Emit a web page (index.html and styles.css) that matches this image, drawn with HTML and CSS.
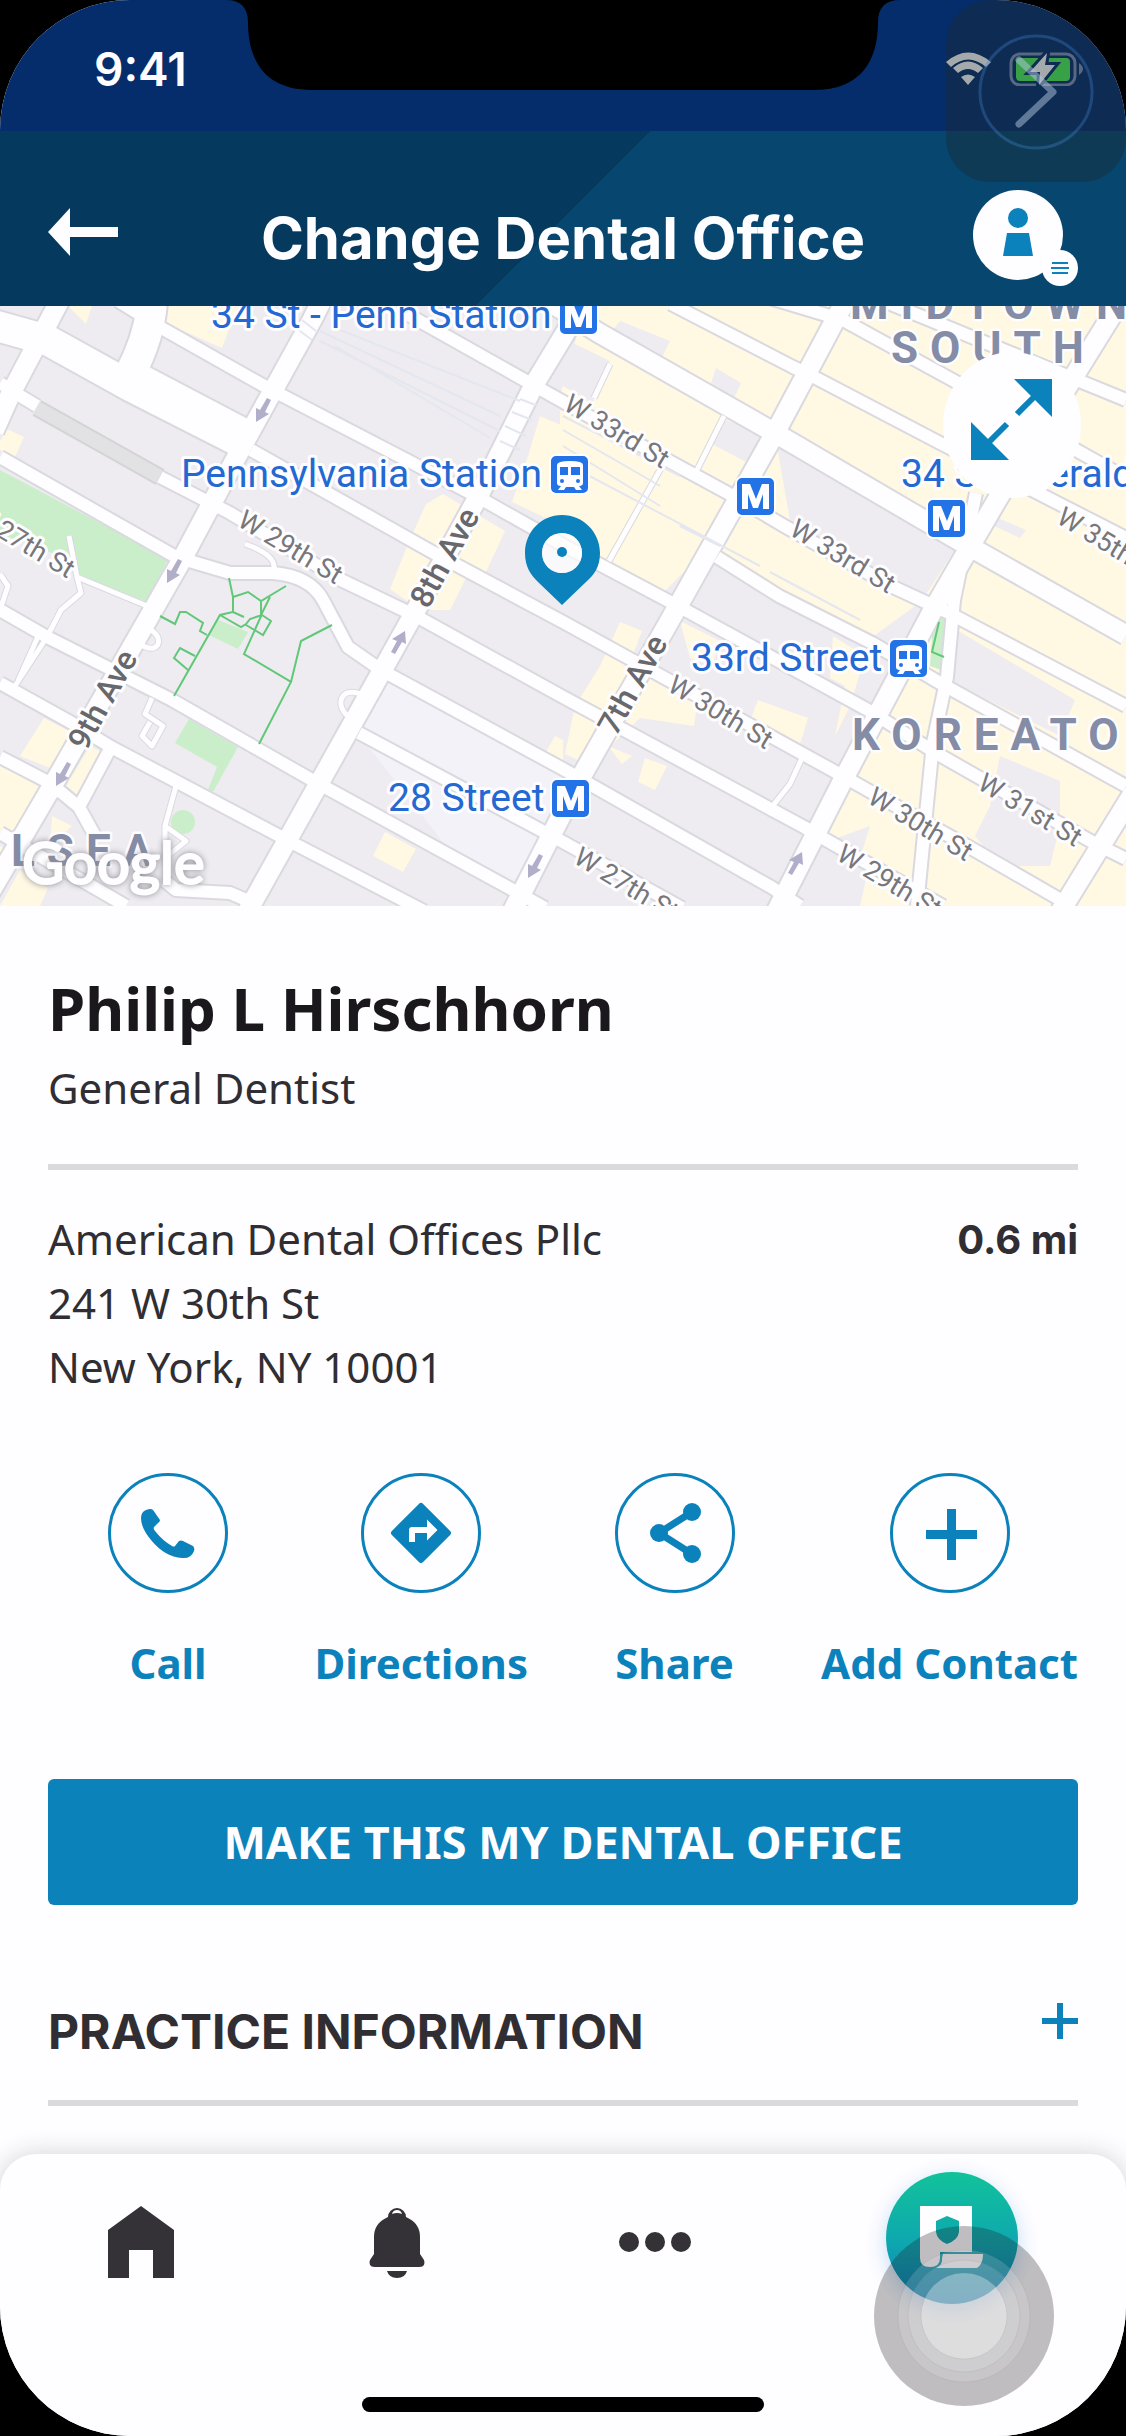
FILE: index.html
```html
<!DOCTYPE html>
<html lang="en">
<head>
<meta charset="utf-8">
<meta name="viewport" content="width=device-width, initial-scale=1">
<title>Change Dental Office</title>
<link rel="stylesheet" href="styles.css">
</head>
<body>
<div class="phone">
  <div class="status-bar">
    <span class="clock">9:41</span>
    <svg class="notch" viewBox="0 0 674 90" aria-hidden="true"><path d="M0 0C15 0 22 8 22 22C22 62 40 90 86 90H588C634 90 652 62 652 22C652 8 659 0 674 0Z"/></svg>
    <svg class="indicators" viewBox="0 0 137 34" role="img" aria-label="Wi-Fi, battery charging">
      <path class="wifi" d="M22 33L15 25Q22 20 29 25ZM7 16L12 21Q22 13 32 21L37 16Q22 3 7 16ZM0 10L5 15Q22 0 40 15L45 10Q22 -9 0 10Z"/>
      <rect class="battery-case" x="65" y="2" width="64" height="31" rx="9"/>
      <path class="battery-case-tip" d="M133 11Q141 17 133 23Z"/>
      <rect class="battery-level" x="70" y="6" width="54" height="23" rx="4"/>
      <path class="bolt" d="M101 1L84 20H94L93 33L109 13H99Z"/>
    </svg>
  </div>

  <header class="app-header">
    <button class="icon-button back" type="button" aria-label="Back">
      <svg width="70" height="48" viewBox="0 0 70 48" fill="currentColor"><path d="M22 0V19H70V29H22V48L0 24Z"/></svg>
    </button>
    <h1 class="app-title">Change Dental Office</h1>
    <button class="icon-button profile" type="button" aria-label="Profile menu">
      <svg width="105" height="96" viewBox="0 0 105 96">
        <circle cx="45" cy="45" r="45" fill="#fefdff"/><circle cx="87" cy="78" r="18" fill="#fefdff"/>
        <g fill="#0b82bb"><circle cx="45" cy="28" r="10"/><path d="M34 43H56L60 66H30Z"/></g>
        <path d="M79 73H95M78 78H96M79 83H95" stroke="#0b82bb" stroke-width="2"/>
      </svg>
    </button>
  </header>

  <section class="map" aria-label="Map">
    <svg class="map-canvas" viewBox="0 0 1126 600" preserveAspectRatio="xMidYMid slice">
      <rect width="1126" height="600" fill="#eeecf0"/>
      <!-- commercial blocks -->
      <g fill="#fff8e2">
        <path d="M165 0H238L222 42L163 16ZM0 135L7 123L24 131L15 151L0 144ZM68 0H92L86 18Z"/>
        <path d="M540 110L563 120V220L512 196L528 150ZM426 198L443 188L505 225L485 268L470 264L450 304L420 304L390 283L408 238Z"/>
        <path d="M585 0H1126V330L940 304L720 180L560 90Z"/>
        <path d="M560 104L735 190L690 260L660 290L560 240Z"/>
        <path d="M735 190L910 290L915 300L860 340L712 256Z"/>
        <path d="M960 235L1126 327V600H845L870 520L815 540L850 470L945 300Z"/>
        <path d="M620 316L642 325L634 346L650 356L700 380L694 420L640 412L590 460L565 448L575 400L600 360ZM680 315L720 335L712 360L690 352ZM758 394L808 412L800 438L750 415ZM645 452L667 460L655 484L638 476ZM608 440L632 450L622 458Z"/>
        <path d="M833 330L865 350L850 400L835 430L845 380L830 372ZM44 412L90 436L70 470L20 450ZM0 460L52 486L28 520L0 527ZM90 440L103 447L78 490L66 480ZM0 540L20 550L0 570ZM52 510L72 520L50 540ZM20 564L48 582L40 600H0ZM385 526L416 543L403 566L373 550ZM555 430L563 434V460L546 446Z"/>
      </g>
      <g fill="#eeecf0">
        <path d="M620 15L670 35L660 55L610 28ZM716 62L741 77L734 92L710 80ZM726 114L762 128L746 156L712 138ZM777 140L956 242L925 290L790 215ZM563 32L610 55L592 98L563 80ZM950 320L1075 394L1060 430L940 370ZM1000 450L1060 475L1060 520L1050 560H1000L975 530L990 500ZM998 212L1026 224L1020 232L994 220ZM820 530L870 555L860 600H795Z"/>
      </g>
      <path d="M386 374L563 470V520L513 575L450 545L356 425Z" fill="#f2f2f8"/>
      <g fill="#c9eec9">
        <path d="M0 164L168 253L147 296L77 268L60 250L0 228Z"/>
        <path d="M218 314L248 326L238 343L209 329ZM189 413L238 441L213 486L208 484L217 461L175 437ZM933 316L947 308L941 364L930 360Z"/>
        <ellipse cx="183" cy="516" rx="12" ry="12"/>
      </g>
      <path d="M37 102L160 171" stroke="#d4d4d7" stroke-width="18" fill="none"/>
      <path d="M37 102L160 171" stroke="#e2e2e4" stroke-width="14" fill="none"/>
      <defs>
        <g id="side-streets">
          <path d="M69 230L77 271L81 287L61 304L47 331L15 380M77 271L147 300M0 304L8 280L0 268M245 238Q280 250 273 267M144 322C165 325 162 350 143 340M152 392L145 408L163 420L152 440L142 430L150 416M176 480L165 520L186 535L170 548M361 388C340 380 335 400 348 410M610 58L594 92M724 110L697 164M665 155L609 255M802 452L790 478L771 502M165 520V560M40 326L18 375"/>
        </g>
        <g id="streets">
          <path d="M0 77L22 91L37 100M160 171L230 207L341 274L416 310L563 391L804 521L821 531L943 600"/>
          <path d="M118 -5L165 24L266 81L478 191L563 239L678 300L868 404L936 447L1094 537L1126 553"/>
          <path d="M251 144L434 247L563 316L832 464L976 545L1066 597"/>
          <path d="M0 151L176 251L230 267H273Q310 270 323 294L348 341L381 364L563 463L771 581L800 600"/>
          <path d="M359 427L563 536L682 602M0 304L47 331L172 394L312 474L513 584L545 602M0 377L72 417L111 441L287 534L424 605M0 451L50 477L79 501L95 530M0 527L126 600M50 477L54 492M111 441L79 501M165 575L176 584L230 587L251 596"/>
          <path d="M400 4L535 80L667 154L735 191L786 221L893 281L947 306L1126 400M717 251L779 290L872 337L940 377L1126 480"/>
          <path d="M671 -2L793 61L814 71L940 137L1126 232M763 -10L843 14L958 77L1076 144L1126 172M886 -4L1126 94"/>
          <path d="M976 187L954 294L947 371L933 437L917 600"/>
        </g>
        <g id="avenues">
          <path d="M60 -6L11 87L-6 125M325 -12L312 14L244 137L180 257L54 477L-12 590M590 -14L535 77L478 191L416 304L246 608M850 -14L775 127L678 300L581 471L510 610M1130 -20L997 194L933 304L843 474L775 608M1140 476L1060 606"/>
          <path d="M540 -10L599 27L775 127L958 234L1126 329"/>
        </g>
        <g id="crosstown">
          <path d="M-10 18L47 34L130 80L248 140M152 -5Q150 30 130 68L248 130"/>
        </g>
      </defs>
      <g fill="none" stroke="#dad9df" stroke-linejoin="round">
        <use href="#side-streets" stroke-width="7"/><use href="#streets" stroke-width="16"/>
        <use href="#avenues" stroke-width="23"/><use href="#crosstown" stroke-width="34"/>
      </g>
      <g fill="none" stroke="#fefdff" stroke-linejoin="round">
        <use href="#side-streets" stroke-width="5"/><use href="#streets" stroke-width="12"/>
        <use href="#avenues" stroke-width="19"/><use href="#crosstown" stroke-width="30"/>
      </g>
      <!-- railway tracks -->
      <path d="M320 25L500 110M320 35L500 125M335 40L490 132M330 20L520 95M520 93L538 100M512 106L532 114M505 120L526 130M500 135L520 144M563 110L680 170M563 124L660 180M563 140L660 200M563 156L760 260M680 220L720 240M770 266L860 314M296 22L312 34M302 14L316 25" stroke="#e4e7ef" stroke-width="2" fill="none"/>
      <!-- park paths -->
      <path d="M229 272L233 291V306L220 309L174 390M233 291L248 286L261 295L286 280M261 295V309L270 291M262 308L244 348L291 376L259 438M291 376L301 335L332 319M233 306L244 311M220 309L241 321L246 318L250 313L262 309L271 315L263 329L246 319M160 310L175 318L180 306H186L203 317L200 325L207 329M188 364L174 352L180 342L195 350M939 316L932 346L944 351" stroke="#60c878" stroke-width="2" fill="none"/>
      <g fill="#b1aeca">
        <path id="one-way" d="M267 92L271 94L265 106L269 108L256 116V102L260 104Z"/>
        <use href="#one-way" x="-89" y="161"/><use href="#one-way" x="-200" y="364"/><use href="#one-way" x="272" y="456"/>
        <path id="one-way-up" d="M391 346L395 348L402 336L406 338L405 325L392 333L397 335Z"/>
        <use href="#one-way-up" x="397" y="221"/>
      </g>
      <g class="transit-label">
        <text x="211" y="22">34 St - Penn Station</text>
        <text x="181" y="181">Pennsylvania Station</text>
        <text x="388" y="505">28 Street</text>
        <text x="691" y="365">33rd Street</text>
        <text x="901" y="181">34 St - Herald Sq</text>
      </g>
      <g class="street-label">
        <text transform="translate(562 103) rotate(31)">W 33rd St</text>
        <text transform="translate(788 228) rotate(31)">W 33rd St</text>
        <text transform="translate(1055 216) rotate(31)">W 35th St</text>
        <text transform="translate(236 219) rotate(31)">W 29th St</text>
        <text transform="translate(-32 213) rotate(31)">W 27th St</text>
        <text transform="translate(666 384) rotate(31)">W 30th St</text>
        <text transform="translate(866 496) rotate(31)">W 30th St</text>
        <text transform="translate(976 482) rotate(31)">W 31st St</text>
        <text transform="translate(835 553) rotate(31)">W 29th St</text>
        <text transform="translate(572 556) rotate(31)">W 27th St</text>
      </g>
      <g class="avenue-label">
        <text transform="translate(428 304) rotate(-61)">8th Ave</text>
        <text transform="translate(86 446) rotate(-61)">9th Ave</text>
        <text transform="translate(616 431) rotate(-61)">7th Ave</text>
      </g>
      <g class="district-label">
        <text x="850" y="13">MIDTOWN</text>
        <text x="891" y="57">SOUTH</text>
        <text x="852" y="444">KOREATOWN</text>
        <text x="11" y="560">LSEA</text>
      </g>
      <defs>
        <g id="metro"><rect width="39" height="39" rx="6" fill="#2373e6" stroke="#fefdff" stroke-width="2"/><path d="M6 32V7H14L20 22L26 7H33V32H27V17L22 31H17L12 17V32Z" fill="#fefdff"/></g>
        <g id="train"><rect width="39" height="39" rx="6" fill="#2373e6" stroke="#fefdff" stroke-width="2"/><path d="M7 10Q7 6 20 6T33 10V28Q33 31 29 31L32 35H26L24 32H16L14 35H8L11 31Q7 31 7 28Z" fill="#fefdff"/><path d="M10 12H18V20H10ZM21 12H30V20H21Z" fill="#2373e6"/><circle cx="12" cy="26" r="2" fill="#2373e6"/><circle cx="28" cy="26" r="2" fill="#2373e6"/></g>
      </defs>
      <use href="#metro" x="559" y="-10"/><use href="#metro" x="736" y="171"/><use href="#metro" x="927" y="193"/><use href="#metro" x="551" y="473"/>
      <use href="#train" x="550" y="149"/><use href="#train" x="889" y="333"/>
      <path d="M562 209C541 209 525 226 525 247C525 261 531 269 538 276L562 299L586 276C594 269 600 261 600 247C600 226 583 209 562 209ZM562 227A20 20 0 1 1 562 267A20 20 0 1 1 562 227Z" fill="#0b82bb" fill-rule="evenodd"/>
      <circle cx="562" cy="247" r="20" fill="#fefdff" fill-opacity=".7"/>
      <circle cx="562" cy="246" r="5" fill="#0b82bb"/>
      <text class="map-brand" x="22" y="578">Google</text>
    </svg>
    <button class="expand" type="button" aria-label="Expand map">
      <svg width="82" height="82" viewBox="0 0 82 82"><g fill="#0b82bb"><path d="M43 0H81V38ZM0 43V81H38Z"/></g><path d="M65 16L46 35M16 65L36 45" stroke="#0b82bb" stroke-width="6"/></svg>
    </button>
  </section>

  <main class="details">
    <h2 class="name">Philip L Hirschhorn</h2>
    <p class="specialty">General Dentist</p>
    <div class="office">
      <address class="address">American Dental Offices Pllc<br>241 W 30th St<br>New York, NY 10001</address>
      <span class="distance">0.6 mi</span>
    </div>
    <div class="actions">
      <a class="action" href="#call"><span class="action-icon"><svg width="72" height="72" viewBox="0 0 72 72"><path d="M14 13Q19 11 21 13L28 23Q28 25 26 26L22 30Q21 32 23 34Q31 44 40 49Q42 50 43 49L47 44Q49 43 51 44L61 49Q63 51 62 54Q59 62 50 61Q33 60 19 43Q9 31 9 21Q9 15 14 13Z"/></svg></span>Call</a>
      <a class="action" href="#directions"><span class="action-icon"><svg width="72" height="72" viewBox="0 0 24 24"><path d="M21.700 11.300l-9-9a1 1 0 0 0-1.400 0l-9 9a1 1 0 0 0 0 1.400l9 9a1 1 0 0 0 1.400 0l9-9a1 1 0 0 0 0-1.400zM14 14.500V12h-4v3H8v-4c0-.6.4-1 1-1h5V7.500l3.500 3.500z"/></svg></span>Directions</a>
      <a class="action" href="#share"><span class="action-icon"><svg width="72" height="72" viewBox="0 0 72 72"><circle cx="53" cy="15" r="9"/><circle cx="20" cy="36" r="9"/><circle cx="53" cy="57" r="9"/><path d="M53 15L20 36L53 57" fill="none" stroke="currentColor" stroke-width="7"/></svg></span>Share</a>
      <a class="action" href="#contact"><span class="action-icon"><svg width="72" height="72" viewBox="0 0 72 72"><path d="M33 12H42V33H63V42H42V63H33V42H12V33H33Z"/></svg></span>Add Contact</a>
    </div>
    <button class="primary" type="button">MAKE THIS MY DENTAL OFFICE</button>
    <h2 class="section-title">
      <button class="section-toggle" type="button" aria-expanded="false">PRACTICE INFORMATION
        <svg width="36" height="42" viewBox="0 0 36 42"><path d="M18 3V39M0 21H36" stroke="#0b82bb" stroke-width="6"/></svg>
      </button>
    </h2>
  </main>

  <nav class="tab-bar" aria-label="Main">
    <div class="tabs">
      <a class="tab" href="#home" aria-label="Home"><svg width="66" height="72" viewBox="0 0 66 72"><path d="M33 0L66 24V72H45V44H21V72H0V24Z"/></svg></a>
      <a class="tab" href="#alerts" aria-label="Notifications"><svg width="56" height="72" viewBox="0 0 56 72"><path fill-rule="evenodd" d="M19 11A9 9 0 0 1 37 11Q51 17 51 31V48L55 54Q57 61 50 61H6Q-1 61 1 54L5 48V31Q5 17 19 11ZM23 8Q28 6 33 8Q32 4 28 4T23 8Z"/><path d="M18 65H38Q36 72 28 72T18 65Z"/></svg></a>
      <a class="tab" href="#more" aria-label="More"><svg width="72" height="20" viewBox="0 0 72 20"><circle cx="10" cy="10" r="10"/><circle cx="36" cy="10" r="10"/><circle cx="62" cy="10" r="10"/></svg></a>
      <a class="tab tab-plan" href="#plan" aria-label="My plan"><svg width="64" height="64" viewBox="0 0 64 64"><path fill-rule="evenodd" d="M0 0H52V46H20V52Q20 61 10 61Q0 61 0 52ZM27 10L16 15V26Q17 34 27 38Q38 34 39 26V15Z"/><path d="M23 48H63Q63 58 57 62H16Q23 59 22 52Z"/></svg></a>
    </div>
    <svg class="touch" viewBox="0 0 180 180" aria-hidden="true">
      <circle cx="90" cy="90" r="90" fill="#1c1a1e" fill-opacity=".28"/>
      <g fill="#fff" stroke="#808084" stroke-opacity=".15"><circle cx="90" cy="90" r="66" fill-opacity=".15"/><circle cx="90" cy="90" r="56" fill-opacity=".12"/><circle cx="90" cy="90" r="43" fill-opacity=".32"/></g>
    </svg>
    <div class="home-indicator"></div>
  </nav>

  <svg class="assistive" viewBox="0 0 180 182" aria-hidden="true">
    <rect width="180" height="182" rx="44" fill="#1c2830" fill-opacity=".4"/>
    <circle cx="90" cy="92" r="56" fill="none" stroke="#4488d0" stroke-opacity=".33" stroke-width="3"/>
    <path d="M73 60L107 92L73 124" fill="none" stroke="#b4c8e0" stroke-opacity=".5" stroke-width="7" stroke-linecap="round" stroke-linejoin="round"/>
  </svg>
</div>
</body>
</html>
```
FILE: styles.css
```css
* { box-sizing: border-box; }

body {
  margin: 0;
  background: #000;
  color: #302e32;
  font: 42px/64px "Noto Sans", sans-serif;
}

h1, h2, p { margin: 0; }
svg { display: block; }

button {
  padding: 0;
  border: 0;
  background: none;
  color: inherit;
  font: inherit;
  cursor: pointer;
}

a { color: inherit; text-decoration: none; }

.phone {
  position: relative;
  display: flex;
  flex-direction: column;
  min-height: 100vh;
  overflow: hidden;
  border-radius: 130px;
  background: #fefdff;
}

.status-bar {
  position: relative;
  display: flex;
  align-items: center;
  justify-content: space-between;
  height: 131px;
  padding: 6px 43px 0 94px;
  background: #052d6b;
  color: #fefdff;
}

.clock { font: 600 46px/64px Inter, sans-serif; }

.notch {
  position: absolute;
  top: 0;
  left: 50%;
  width: 674px;
  transform: translateX(-50%);
}

.indicators { width: 137px; height: 34px; }
.wifi { fill: #fff; }
.battery-case { fill: none; stroke: #8093b6; stroke-width: 3; }
.battery-case-tip { fill: #8093b6; }
.battery-level { fill: #4cf058; }
.bolt { fill: #fff; stroke: #052d6b; stroke-width: 6; paint-order: stroke; }

.app-header {
  display: grid;
  grid-template-columns: 1fr auto 1fr;
  align-items: center;
  height: 175px;
  padding: 38px 48px 0;
  background: linear-gradient(135deg, #053a5e 50%, #07466e 50%);
  color: #fefdff;
}

.back { justify-self: start; padding-bottom: 12px; }
.profile { justify-self: end; }
.app-title { font: 700 58px/80px Inter, sans-serif; }

.map { position: relative; height: 600px; }
.map-canvas { width: 100%; height: 100%; }

.map text { font-family: Roboto, sans-serif; paint-order: stroke; stroke: #fefdff; stroke-linejoin: round; }
.transit-label { font-size: 39px; fill: #2468d2; stroke-width: 6px; }
.street-label { font-size: 27px; fill: #77777b; stroke-width: 6px; }
.avenue-label { font-size: 32px; font-weight: 500; fill: #68686c; stroke-width: 6px; }
.district-label { font-size: 44px; font-weight: 700; letter-spacing: 12px; fill: #848ca6; stroke-width: 5px; }

.map .map-brand {
  font: 500 58px Lato, sans-serif;
  fill: #fefdff;
  stroke-width: 2px;
  filter: drop-shadow(0 0 3px #8c8c94);
}

.expand {
  position: absolute;
  top: 46px;
  right: 45px;
  display: grid;
  place-items: center;
  width: 138px;
  height: 146px;
  padding-bottom: 10px;
  border-radius: 50%;
  background: #fefdff;
}

.details { padding: 62px 48px 48px; }

.name { color: #1a181c; font-size: 60px; line-height: 80px; font-weight: 700; }

.specialty {
  padding: 8px 0 44px;
  border-bottom: 6px solid #dad9dc;
}

.office {
  display: flex;
  justify-content: space-between;
  padding-top: 37px;
}

.address { font-style: normal; }
.distance { font: 700 40px/66px Inter, sans-serif; }

.actions {
  display: flex;
  justify-content: space-between;
  padding: 74px 0 84px 60px;
}

.action {
  display: flex;
  flex-direction: column;
  align-items: center;
  gap: 38px;
  color: #0b82bb;
  font-weight: 700;
}

.action-icon {
  display: grid;
  place-items: center;
  width: 120px;
  height: 120px;
  border: 3px solid currentColor;
  border-radius: 50%;
}

.action-icon svg { fill: currentColor; }

.primary {
  width: 100%;
  height: 126px;
  border-radius: 6px;
  background: #0c82bb;
  color: #fefdff;
  font-size: 45px;
  font-weight: 700;
}

.section-title {
  padding: 95px 0 36px;
  border-bottom: 6px solid #dad9dc;
}

.section-toggle {
  display: flex;
  justify-content: space-between;
  width: 100%;
  text-align: left;
  font: 700 48px/64px Inter, sans-serif;
}

.tab-bar {
  position: relative;
  margin-top: auto;
  padding: 18px 108px 24px;
  border-radius: 36px 36px 0 0;
  background: #fefdff;
  box-shadow: 0 0 26px rgba(40, 36, 44, 0.2);
}

.tabs {
  display: flex;
  align-items: center;
  justify-content: space-between;
}

.tab { padding-top: 8px; fill: #343236; }

.tab-plan {
  display: grid;
  place-items: center;
  width: 132px;
  height: 132px;
  padding: 0;
  border-radius: 50%;
  background: linear-gradient(#12c29a, #0ea9ae 50%, #0b82bb);
  box-shadow: 0 6px 20px rgba(11, 130, 220, 0.25);
  fill: #fefdff;
}

.touch {
  position: absolute;
  top: 72px;
  right: 72px;
  width: 180px;
}

.home-indicator {
  width: 402px;
  height: 15px;
  margin: 93px auto 0;
  border-radius: 8px;
  background: #000;
}

.assistive {
  position: absolute;
  top: 0;
  right: 0;
  width: 180px;
  pointer-events: none;
}
```
